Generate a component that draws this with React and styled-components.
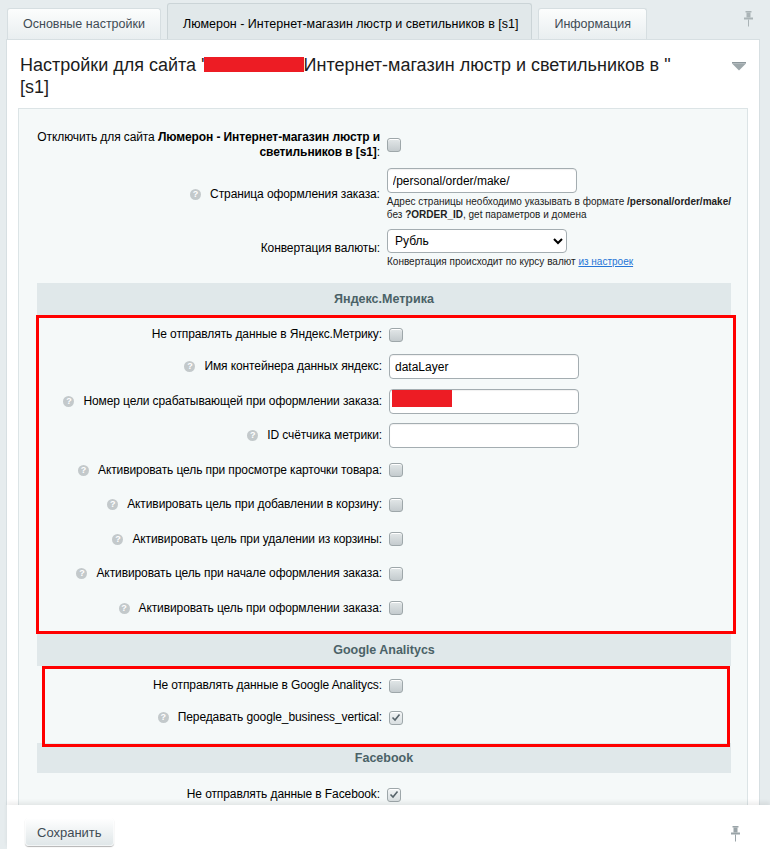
import React from 'react';
import styled, { createGlobalStyle } from 'styled-components';

const GlobalStyle = createGlobalStyle`
  html, body { margin: 0; padding: 0; }
  body {
    background: #e6ecee;
    font-family: "Liberation Sans", Arial, sans-serif;
    font-size: 13px;
    color: #000;
    overflow: hidden;
  }
`;

const Page = styled.div`
  height: 849px;
  display: flex;
  flex-direction: column;
`;

const TabBar = styled.div`
  height: 39px;
  flex-shrink: 0;
  display: flex;
  align-items: flex-end;
  gap: 6px;
  padding: 0 17px 0 7px;
`;

const Tab = styled.div`
  height: ${p => (p.$active ? 36 : 31)}px;
  box-sizing: border-box;
  padding: ${p => (p.$active ? '4px 13px 0 15px' : '0 15px')};
  display: flex;
  align-items: center;
  border: 1px solid ${p => (p.$active ? '#cbd4d7' : '#d6dee1')};
  border-bottom: none;
  border-radius: 3px 3px 0 0;
  background: ${p => (p.$active ? '#e1e8ea' : 'linear-gradient(#fcfdfd, #e9eef0)')};
  color: ${p => (p.$active ? '#000' : '#3f4b54')};
  font-size: 12.5px;
  white-space: nowrap;
`;

const TabPin = styled.div`
  margin-left: auto;
  margin-bottom: 12px;
  display: flex;
`;

const Panel = styled.div`
  flex: 1;
  min-height: 0;
  margin: 0 10px 0 6px;
  background: #fff;
  border: 1px solid #d7dfe2;
  border-bottom: none;
  overflow: hidden;
  display: flex;
  flex-direction: column;
`;

const PanelHead = styled.div`
  display: flex;
  align-items: flex-start;
  gap: 10px;
  padding: 14px 13px 10px 13px;
`;

const Title = styled.h1`
  flex: 1;
  margin: 0;
  padding-right: 40px;
  font-size: 18px;
  line-height: 22px;
  font-weight: normal;
  color: #1c1c1c;
`;

const Redact = styled.span`
  display: inline-block;
  width: ${p => p.$w}px;
  height: ${p => p.$h}px;
  margin-left: ${p => p.$ml || 0}px;
  background: #ed1c24;
  vertical-align: ${p => p.$va || 'middle'};
`;

const Collapse = styled.div`
  margin-top: 8px;
  display: flex;
`;

const Content = styled.div`
  flex: 1;
  margin: 0 11px;
  background: #f5f9f9;
  border: 1px solid #dce4e6;
  border-bottom: none;
  padding: 17px 16px 0 18px;
`;

const Row = styled.div`
  display: grid;
  grid-template-columns: 1fr 1fr;
  align-items: center;
  min-height: ${p => p.$h || 0}px;
  padding: ${p => p.$py || 0}px 0;
  margin-top: ${p => p.$mt || 0}px;
`;

const Label = styled.div`
  text-align: right;
  padding-right: 4px;
  font-size: 12px;
  letter-spacing: -0.1px;
  line-height: 15px;
`;

const Control = styled.div`
  padding-left: 3px;
  display: flex;
  flex-direction: column;
  align-items: flex-start;
`;

const Help = styled.span`
  display: inline-block;
  width: 11px;
  height: 11px;
  border-radius: 50%;
  background: #c3c9cb;
  color: #fff;
  font-size: 9px;
  font-weight: bold;
  letter-spacing: 0;
  line-height: 11px;
  text-align: center;
  margin-right: 9px;
  vertical-align: 1px;
`;

const Check = styled.span`
  display: inline-flex;
  align-items: center;
  justify-content: center;
  width: 14px;
  height: 14px;
  box-sizing: border-box;
  border: 1px solid #9ea7aa;
  border-radius: 3px;
  background: ${p => (p.$on ? 'linear-gradient(#f1f4f5, #d9dfe1)' : 'linear-gradient(#e2e7e8, #c4cbce)')};
  box-shadow: inset 0 1px 0 #fff;
`;

const TextInput = styled.input`
  width: ${p => p.$w || 190}px;
  height: 25px;
  box-sizing: border-box;
  border: 1px solid #a4adb1;
  border-radius: 4px;
  padding: 0 5px;
  font: 12px "Liberation Sans", Arial, sans-serif;
  color: #000;
  background: #fff;
  box-shadow: inset 0 1px 1px rgba(0, 0, 0, 0.06);
  outline: none;
`;

const FieldWrap = styled.div`
  position: relative;
  display: flex;
`;

const FieldRedact = styled(Redact)`
  position: absolute;
  left: 3px;
  top: 1px;
`;

const Select = styled.select`
  width: 180px;
  height: 24px;
  border: 1px solid #a4adb1;
  border-radius: 4px;
  padding: 0 3px;
  font: 12px "Liberation Sans", Arial, sans-serif;
  color: #000;
  background: #fff;
`;

const Hint = styled.div`
  margin-top: 3px;
  font-size: 10px;
  line-height: 12.5px;
  color: #222;
  white-space: nowrap;
`;

const HintLink = styled.a`
  color: #2675d7;
  text-decoration: underline;
`;

const Heading = styled.div`
  height: ${p => p.$h || 32}px;
  margin-top: ${p => p.$mt || 0}px;
  display: flex;
  align-items: center;
  justify-content: center;
  background: #e0e8ea;
  color: #4b6267;
  font-size: 12.5px;
  font-weight: bold;
`;

const Marked = styled.div`
  position: relative;
  z-index: 1;
  border: 3px solid #ff0000;
  margin: ${p => p.$m};
  padding: ${p => p.$pt}px 0 ${p => p.$pb}px;
`;

const BottomBar = styled.div`
  height: 44px;
  flex-shrink: 0;
  box-sizing: border-box;
  margin-left: 7px;
  background: #fff;
  display: flex;
  align-items: flex-start;
  padding: 13px 30px 0 18px;
  box-shadow: 0 -3px 4px rgba(0, 0, 0, 0.07);
  position: relative;
`;

const SaveButton = styled.button`
  height: 28px;
  padding: 0 12px;
  border: none;
  border-radius: 4px;
  background: linear-gradient(#ffffff, #dfe6e8);
  box-shadow: 0 1px 1px rgba(0, 0, 0, 0.3), inset 0 0 0 1px rgba(255, 255, 255, 0.6);
  font: 13px "Liberation Sans", Arial, sans-serif;
  color: #3f4b54;
`;

const BarPin = styled.div`
  margin-left: auto;
  margin-top: 8px;
  display: flex;
`;

const PinIcon = ({ color = '#aab3b6' }) => (
  <svg width="9" height="16" viewBox="0 0 9 16">
    <rect x="1.5" y="0" width="6" height="1.5" fill={color} />
    <rect x="2.5" y="1.5" width="4" height="5" fill={color} />
    <rect x="0" y="6.5" width="9" height="2" fill={color} />
    <rect x="4" y="8.5" width="1" height="7" fill={color} />
  </svg>
);

const CheckMark = () => (
  <svg width="10" height="9" viewBox="0 0 10 9">
    <path d="M1.5 4.5 L4 7 L8.5 1.5" fill="none" stroke="#56636a" strokeWidth="1.6" />
  </svg>
);

const Box = ({ on }) => <Check $on={on}>{on && <CheckMark />}</Check>;

const yandexRows = [
  { label: 'Не отправлять данные в Яндекс.Метрику:', kind: 'check', h: 30 },
  { label: 'Имя контейнера данных яндекс:', help: true, kind: 'input', value: 'dataLayer' },
  { label: 'Номер цели срабатывающей при оформлении заказа:', help: true, kind: 'input', redacted: true },
  { label: 'ID счётчика метрики:', help: true, kind: 'input', value: '' },
  { label: 'Активировать цель при просмотре карточки товара:', help: true, kind: 'check' },
  { label: 'Активировать цель при добавлении в корзину:', help: true, kind: 'check' },
  { label: 'Активировать цель при удалении из корзины:', help: true, kind: 'check' },
  { label: 'Активировать цель при начале оформления заказа:', help: true, kind: 'check' },
  { label: 'Активировать цель при оформлении заказа:', help: true, kind: 'check' },
];

const googleRows = [
  { label: 'Не отправлять данные в Google Analitycs:', kind: 'check', h: 30 },
  { label: 'Передавать google_business_vertical:', help: true, kind: 'check', on: true },
];

const OptionRow = ({ row }) => (
  <Row $h={row.h || 34.5}>
    <Label>
      {row.help && <Help>?</Help>}
      {row.label}
    </Label>
    <Control>
      {row.kind === 'check' && <Box on={row.on} />}
      {row.kind === 'input' && (
        <FieldWrap>
          <TextInput defaultValue={row.value || ''} />
          {row.redacted && <FieldRedact $w={60} $h={17} />}
        </FieldWrap>
      )}
    </Control>
  </Row>
);

export default function App() {
  return (
    <Page>
      <GlobalStyle />
      <TabBar>
        <Tab>Основные настройки</Tab>
        <Tab $active>Люмерон - Интернет-магазин люстр и светильников в [s1]</Tab>
        <Tab>Информация</Tab>
        <TabPin><PinIcon /></TabPin>
      </TabBar>

      <Panel>
        <PanelHead>
          <Title>
            Настройки для сайта "<Redact $w={100} $h={15} $ml={-4} $va="-1px" />Интернет-магазин люстр и светильников в " [s1]
          </Title>
          <Collapse>
            <svg width="14" height="9" viewBox="0 0 14 9">
              <rect x="0" y="0" width="14" height="1.5" fill="#8c979b" />
              <polygon points="0,1.5 14,1.5 7,8.5" fill="#9ea8ab" />
            </svg>
          </Collapse>
        </PanelHead>

        <Content>
          <Row $py={4}>
            <Label>
              Отключить для сайта <b>Люмерон - Интернет-магазин люстр и светильников в [s1]</b>:
            </Label>
            <Control><Box /></Control>
          </Row>
          <Row $py={4}>
            <Label><Help>?</Help>Страница оформления заказа:</Label>
            <Control>
              <TextInput defaultValue="/personal/order/make/" />
              <Hint>
                Адрес страницы необходимо указывать в формате <b>/personal/order/make/</b>
                <br />
                без <b>?ORDER_ID</b>, get параметров и домена
              </Hint>
            </Control>
          </Row>
          <Row $py={4}>
            <Label>Конвертация валюты:</Label>
            <Control>
              <Select defaultValue="rub">
                <option value="rub">Рубль</option>
              </Select>
              <Hint>
                Конвертация происходит по курсу валют <HintLink href="#">из настроек</HintLink>
              </Hint>
            </Control>
          </Row>

          <Heading $mt={10}>Яндекс.Метрика</Heading>
          <Marked $m="0 -5px 0 -1px" $pt={2} $pb={5}>
            {yandexRows.map((row, i) => <OptionRow key={i} row={row} />)}
          </Marked>

          <Heading>Google Analitycs</Heading>
          <Marked $m="0 1px -4px 5px" $pt={2} $pb={8.5}>
            {googleRows.map((row, i) => <OptionRow key={i} row={row} />)}
          </Marked>

          <Heading $h={30}>Facebook</Heading>
          <Row $h={34} $mt={5}>
            <Label>Не отправлять данные в Facebook:</Label>
            <Control><Box on /></Control>
          </Row>
        </Content>
      </Panel>

      <BottomBar>
        <SaveButton>Сохранить</SaveButton>
        <BarPin><PinIcon color="#9aa4a8" /></BarPin>
      </BottomBar>
    </Page>
  );
}
